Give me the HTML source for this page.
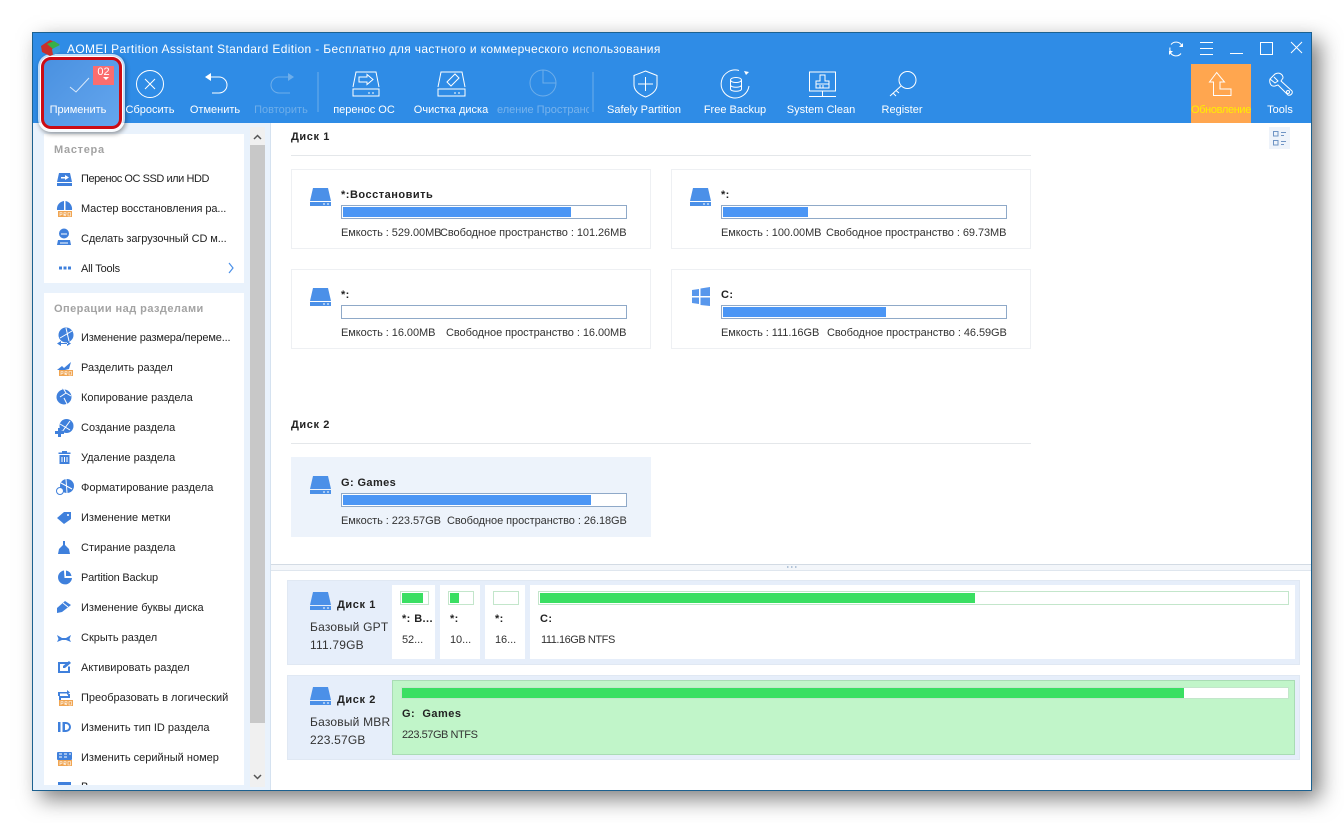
<!DOCTYPE html>
<html><head><meta charset="utf-8"><style>
html,body{margin:0;padding:0;background:#fff;width:1344px;height:823px;overflow:hidden;font-family:"Liberation Sans",Arial,sans-serif;font-size:11px;color:#1a1a1a}
div,span{position:absolute;box-sizing:border-box}
.t{white-space:nowrap;line-height:14px;height:14px;margin-top:1px}
.tb{color:#fff;text-align:center;width:100px;top:102px}
.si{left:81px;color:#222;letter-spacing:0}
.h{font-weight:bold;color:#222;letter-spacing:.4px}
.card{width:360px;height:80px;border:1px solid #eef0f3;background:#fff}
.bar{width:286px;height:14px;border:1px solid #8fa9c8;background:#fff}
.fill{left:1px;top:1px;height:10px;background:#4b96f5}
.cap{left:341px;color:#333;letter-spacing:-.06px}
.ntfs{letter-spacing:-.45px}
.gb{border:1px solid #c3e6cb;background:#fff}
.gf{background:#3adf62}
.cell{background:#fff;top:585px;height:74px}
svg{position:absolute;left:0;top:0}
</style></head><body>
<div style="left:32px;top:32px;width:1280px;height:759px;box-shadow:8px 8px 20px rgba(0,0,0,.5);background:#fff;border:1px solid #1c6190"></div>
<div style="left:33px;top:33px;width:1278px;height:90px;background:#2f8ce6"></div>
<div style="left:33px;top:123px;width:238px;height:667px;background:#e9f2fc"></div>
<div style="left:270px;top:123px;width:1px;height:667px;background:#d5e2f0"></div>
<div style="left:44px;top:134px;width:200px;height:149px;background:#fff"></div>
<div style="left:44px;top:293px;width:200px;height:492px;background:#fff"></div>
<div style="left:250px;top:127px;width:15px;height:660px;background:#f0f0f0"></div>
<div style="left:250px;top:145px;width:15px;height:578px;background:#c8c8c8"></div>
<div style="left:271px;top:564px;width:1040px;height:1px;background:#d3dbe4"></div>
<div style="left:271px;top:565px;width:1040px;height:5px;background:#f3f6fa"></div>
<div style="left:271px;top:570px;width:1040px;height:1px;background:#dfe6ee"></div>

<!-- apply highlight -->
<div style="left:38px;top:54px;width:87px;height:78px;border-radius:13px;background:#fff;opacity:.7;box-shadow:1px 2px 5px rgba(0,0,0,.55)"></div>
<div style="left:41px;top:57px;width:81px;height:72px;border:3px solid #cc0c14;border-radius:10px;background:linear-gradient(135deg,#4a91e0,#64a6ee);box-shadow:0 0 0 1px #fff"></div>
<div style="left:93px;top:66px;width:21px;height:19px;background:#fb6d6f"></div>
<div class="t" style="left:93px;top:64px;width:21px;text-align:center;color:#fff;font-size:11px">02</div>

<!-- title -->
<div class="t" style="left:67px;top:41px;color:#fff;font-size:12px;letter-spacing:.36px">AOMEI Partition Assistant Standard Edition - Бесплатно для частного и коммерческого использования</div>

<!-- toolbar labels -->
<div class="t tb" style="left:28px">Применить</div>
<div class="t tb" style="left:100px">Сбросить</div>
<div class="t tb" style="left:165px">Отменить</div>
<div class="t tb" style="left:231px;color:#6eaeea">Повторить</div>
<div class="t tb" style="left:314px">перенос ОС</div>
<div class="t tb" style="left:401px">Очистка диска</div>
<div class="t tb" style="left:497px;width:92px;overflow:hidden;color:#78b3ec;text-align:left"><span class="t" style="left:0;top:0;margin-top:0">еление Пространс</span></div>
<div class="t tb" style="left:594px">Safely Partition</div>
<div class="t tb" style="left:685px">Free Backup</div>
<div class="t tb" style="left:771px">System Clean</div>
<div class="t tb" style="left:852px">Register</div>
<div style="left:1191px;top:64px;width:60px;height:59px;background:#ffa64f"></div>
<div class="t tb" style="left:1171px;color:#ffee00;letter-spacing:-.35px">Обновление</div>
<div class="t tb" style="left:1230px">Tools</div>

<!-- sidebar text -->
<div class="t h" style="left:54px;top:142px;color:#a3a3a3;letter-spacing:.7px">Мастера</div>
<div class="t si" style="top:171px;letter-spacing:-.45px">Перенос ОС SSD или HDD</div>
<div class="t si" style="top:201px;letter-spacing:-.1px">Мастер восстановления ра...</div>
<div class="t si" style="top:231px;letter-spacing:-.1px">Сделать загрузочный CD м...</div>
<div class="t si" style="top:261px;letter-spacing:-.2px">All Tools</div>
<div class="t h" style="left:54px;top:301px;color:#a3a3a3;letter-spacing:.45px">Операции над разделами</div>
<div class="t si" style="top:330px;letter-spacing:-.15px">Изменение размера/переме...</div>
<div class="t si" style="top:360px">Разделить раздел</div>
<div class="t si" style="top:390px">Копирование раздела</div>
<div class="t si" style="top:420px">Создание раздела</div>
<div class="t si" style="top:450px">Удаление раздела</div>
<div class="t si" style="top:480px">Форматирование раздела</div>
<div class="t si" style="top:510px">Изменение метки</div>
<div class="t si" style="top:540px">Стирание раздела</div>
<div class="t si" style="top:570px;letter-spacing:-.2px">Partition Backup</div>
<div class="t si" style="top:600px">Изменение буквы диска</div>
<div class="t si" style="top:630px">Скрыть раздел</div>
<div class="t si" style="top:660px">Активировать раздел</div>
<div class="t si" style="top:690px">Преобразовать в логический</div>
<div class="t si" style="top:720px">Изменить тип ID раздела</div>
<div class="t si" style="top:750px">Изменить серийный номер</div>
<div style="left:81px;top:780px;width:100px;height:5px;overflow:hidden"><span class="t" style="left:0;top:0;margin-top:0;color:#222">В</span></div>

<!-- top cards -->
<div class="t h" style="left:291px;top:129px;letter-spacing:.6px">Диск 1</div>
<div style="left:291px;top:155px;width:740px;height:1px;background:#e4e7ea"></div>
<div class="t h" style="left:291px;top:417px;letter-spacing:.6px">Диск 2</div>
<div style="left:291px;top:443px;width:740px;height:1px;background:#e4e7ea"></div>

<div class="card" style="left:291px;top:169px"></div>
<div class="card" style="left:671px;top:169px"></div>
<div class="card" style="left:291px;top:269px"></div>
<div class="card" style="left:671px;top:269px"></div>
<div class="card" style="left:291px;top:457px;background:#edf3fb;border-color:#edf3fb"></div>

<div class="t h" style="left:341px;top:187px;letter-spacing:.5px">*:Восстановить</div>
<div class="bar" style="left:341px;top:205px"><div class="fill" style="width:228px"></div></div>
<div class="t cap" style="top:225px">Емкость : 529.00MB</div><div class="t cap" style="left:440px;top:225px">Свободное пространство : 101.26MB</div>

<div class="t h" style="left:721px;top:187px">*:</div>
<div class="bar" style="left:721px;top:205px"><div class="fill" style="width:85px"></div></div>
<div class="t cap" style="left:721px;top:225px">Емкость : 100.00MB</div><div class="t cap" style="left:826px;top:225px">Свободное пространство : 69.73MB</div>

<div class="t h" style="left:341px;top:287px">*:</div>
<div class="bar" style="left:341px;top:305px"></div>
<div class="t cap" style="top:325px">Емкость : 16.00MB</div><div class="t cap" style="left:446px;top:325px">Свободное пространство : 16.00MB</div>

<div class="t h" style="left:721px;top:287px">C:</div>
<div class="bar" style="left:721px;top:305px"><div class="fill" style="width:163px"></div></div>
<div class="t cap" style="left:721px;top:325px">Емкость : 111.16GB</div><div class="t cap" style="left:827px;top:325px">Свободное пространство : 46.59GB</div>

<div class="t h" style="left:341px;top:475px">G: Games</div>
<div class="bar" style="left:341px;top:493px"><div class="fill" style="width:248px"></div></div>
<div class="t cap" style="top:513px">Емкость : 223.57GB</div><div class="t cap" style="left:447px;top:513px">Свободное пространство : 26.18GB</div>

<!-- disk map -->
<div style="left:287px;top:580px;width:1013px;height:85px;background:#e6eefa;border:1px solid #e0e8f3"></div>
<div style="left:287px;top:675px;width:1013px;height:85px;background:#e6eefa;border:1px solid #e0e8f3"></div>
<div class="cell" style="left:392px;width:43px"></div>
<div class="cell" style="left:440px;width:40px"></div>
<div class="cell" style="left:485px;width:40px"></div>
<div class="cell" style="left:530px;width:765px"></div>
<div class="gb" style="left:400px;top:591px;width:29px;height:14px"></div><div class="gf" style="left:402px;top:593px;width:21px;height:10px"></div>
<div class="gb" style="left:448px;top:591px;width:26px;height:14px"></div><div class="gf" style="left:450px;top:593px;width:9px;height:10px"></div>
<div class="gb" style="left:493px;top:591px;width:26px;height:14px"></div>
<div class="gb" style="left:538px;top:591px;width:751px;height:14px"></div><div class="gf" style="left:540px;top:593px;width:435px;height:10px"></div>

<div class="t h" style="left:402px;top:611px">*: B...</div><div class="t cap" style="left:402px;top:632px">52...</div>
<div class="t h" style="left:450px;top:611px">*:</div><div class="t cap" style="left:450px;top:632px">10...</div>
<div class="t h" style="left:495px;top:611px">*:</div><div class="t cap" style="left:495px;top:632px">16...</div>
<div class="t h" style="left:540px;top:611px">C:</div><div class="t cap ntfs" style="left:541px;top:632px">111.16GB NTFS</div>

<div style="left:392px;top:680px;width:903px;height:75px;background:#c1f5c9;border:1px solid #a9dcb4"></div>
<div style="left:401px;top:687px;width:888px;height:12px;background:#fff;border:1px solid #c3e6cb"></div>
<div class="gf" style="left:402px;top:688px;width:782px;height:10px"></div>
<div class="t h" style="left:402px;top:706px;letter-spacing:.5px">G:&nbsp; Games</div>
<div class="t cap ntfs" style="left:402px;top:727px">223.57GB NTFS</div>

<div class="t h" style="left:337px;top:597px;letter-spacing:.6px">Диск 1</div>
<div class="t" style="left:310px;top:619px;font-size:12px;color:#333;letter-spacing:.2px">Базовый GPT</div>
<div class="t" style="left:310px;top:637px;font-size:12px;color:#333;letter-spacing:.2px">111.79GB</div>
<div class="t h" style="left:337px;top:692px;letter-spacing:.6px">Диск 2</div>
<div class="t" style="left:310px;top:714px;font-size:12px;color:#333;letter-spacing:.2px">Базовый MBR</div>
<div class="t" style="left:310px;top:732px;font-size:12px;color:#333;letter-spacing:.2px">223.57GB</div>

<svg width="1344" height="823" viewBox="0 0 1344 823" fill="none">
<defs>
<g id="hdd"><path d="M3 0H18L21 13H0Z" fill="#4b90e8"/><path d="M0 14H21V18H0Z" fill="#4b90e8"/><path d="M13 16h2M17 16h2" stroke="#fff"/></g>
<g id="pro"><rect width="14" height="6" fill="#f0a552"/><path d="M2 5v-3.500h2v2H2M6 5V1.500h2v2H6l2 1.500M10 1.500h2.500V5H10z" stroke="#fff" stroke-width=".6"/></g>
</defs>
<!-- logo -->
<path d="M41 46L50 40 59 44 60 52 50 56 42 52Z" fill="#c9302a"/><path d="M47 44L54 41 60 45 53 49Z" fill="#38b048"/><path d="M52 49L60 45 60 52 53 55Z" fill="#3a9ad8"/>
<!-- splitter dots -->
<path d="M787 567h1.500M791 567h1.500M795 567h1.500" stroke="#9db4cc" stroke-width="1.500"/>
<!-- toolbar icons -->
<g stroke="#fff" stroke-width="1">
<path d="M70 87L76 92 89 78" stroke="#dbeafb"/>
<circle cx="150" cy="84" r="13.500"/><path d="M145 79L155 89M155 79L145 89"/>
<path d="M209 77H219A8 8 0 0 1 219 93H212"/>
<path d="M279 77A8 8 0 0 0 279 93H290M279 77H290" stroke="#6eaeea"/>
<path d="M353 87L356 72H376L379 87M353 89H379V96H353ZM372 93h2M368 93h2"/>
<path d="M359 77H367V74.500L373 79.500 367 84.500V82H359Z"/>
<path d="M438 87L441 72H462L465 87M438 89H465V96H438ZM458 93h2M454 93h2"/>
<path d="M447 82L455 74 459 78 451 86Z"/>
<path d="M593 72V112M318 72V112" stroke="#6eaeea"/>
<circle cx="543" cy="83" r="13" stroke="#6eaeea"/><path d="M543 70V83H556" stroke="#6eaeea"/>
<path d="M645.500 71L657 75.500V85C657 91 651 95 645.500 97 640 95 634 91 634 85V75.500Z"/><path d="M645.500 77V91M638 84H653"/>
<path d="M749 86A14 14 0 1 1 739 70.500"/>
<ellipse cx="736" cy="80" rx="5.500" ry="2.500"/><path d="M730.500 80V89C730.500 92 741.500 92 741.500 89V80M730.500 85C730.500 88 741.500 88 741.500 85"/>
<path d="M809.500 72H835.500V91H809.500ZM822.500 91V96M809 96.500H836"/>
<path d="M820 75H825V81H829V88H816V81H820ZM816 84H829M820 85V88M823 85V88"/>
<circle cx="907.500" cy="80" r="8.500"/><path d="M901 86L890 96M893 93L896 96M896 90.500L899 93"/>
<path d="M1216.700 72.500L1209.500 82H1213.500V95.500H1231V89H1220V82H1224.500Z"/>
<path d="M1270 79L1275 74C1279 72 1283 74 1283 78L1281 81 1292 91C1293 93 1291 96 1288 95L1278 85 1275 86C1271 87 1269 83 1270 79L1275 83 1278 81 1274 77" stroke-linejoin="round"/><circle cx="1288" cy="92" r="1.500"/>
<path d="M1171 44.500A6.500 6.500 0 0 1 1182 46M1181 53.500A6.500 6.500 0 0 1 1170 52M1170 47.500A6.500 6.500 0 0 0 1170.500 52"/>
<path d="M1200 42.500H1213M1200 48.500H1213M1200 54.500H1213M1230 53.500H1243"/>
<rect x="1260.500" y="42.500" width="12" height="12"/><path d="M1291 42L1302 53M1302 42L1291 53"/>
</g>
<path d="M205 77L211 73V81Z" fill="#fff"/><path d="M294 77L288 73V81Z" fill="#6eaeea"/><path d="M744 71L749 72 746 75Z" fill="#fff"/>
<path d="M1183 43V47H1179ZM1169 55V51H1173Z" fill="#fff"/>
<path d="M103 77H109L106 80Z" fill="#fff"/>
<!-- view toggle -->
<rect x="1269" y="127" width="21" height="22" fill="#eef3fa"/>
<g stroke="#6f94c4"><rect x="1273.500" y="131.500" width="4.500" height="4.500"/><rect x="1273.500" y="140.500" width="4.500" height="4.500"/><path d="M1281 132.500h5M1281 135.500h3M1281 141.500h5M1281 144.500h3"/></g>
<!-- scroll arrows -->
<path d="M254 139L257.500 135.500 261 139" stroke="#555" stroke-width="1.500"/>
<path d="M254 775L257.500 778.500 261 775" stroke="#555" stroke-width="1.500"/>
<path d="M229 263L233 268 229 273" stroke="#4b90e8" stroke-width="1.200"/>
<!-- hdd icons -->
<use href="#hdd" x="310" y="188"/><use href="#hdd" x="690" y="188"/><use href="#hdd" x="310" y="288"/><use href="#hdd" x="310" y="476"/>
<use href="#hdd" x="310" y="592"/><use href="#hdd" x="310" y="687"/>
<path d="M692 290L699 289V296H692ZM700.500 288.500L710 287V296H700.500ZM692 297.500H699V304L692 303ZM700.500 297.500H710V306L700.500 305Z" fill="#5897ec"/>
<!-- sidebar icons -->
<g fill="#3f80dc">
<path d="M59 173H70L72 182H57ZM57 183H72V186H57Z"/><path d="M61 177H65V175L69 177.500 65 180V178.500H61Z" fill="#fff"/>
<path d="M65.500 201A8 8 0 0 1 72 210H65.500ZM64 201V210H57A8 8 0 0 1 64 201Z"/>
<circle cx="64" cy="233.500" r="5"/><path d="M58 240H70L71 245H57Z"/><path d="M61 234h6" stroke="#fff"/><path d="M60 243h8" stroke="#fff"/>
<rect x="59" y="266.500" width="3" height="3"/><rect x="63.500" y="266.500" width="3" height="3"/><rect x="68" y="266.500" width="3" height="3"/>
<circle cx="66" cy="335" r="7.500"/><path d="M60 338L72 331M66 328L69 341" stroke="#fff"/><path d="M57 343.500L61 341V346ZM71 343.500L67 341V346ZM60 343h8v1h-8Z"/>
<path d="M57 370L62 366 64 368 71 362 69 369 65 370Z"/>
<circle cx="64" cy="397" r="7.500"/><path d="M63 388L66 393 60 397M66 393L71 396M64 398L67 404" stroke="#fff"/>
<circle cx="66.500" cy="426" r="7"/><path d="M62 432L70 421M60 424L70 430" stroke="#fff"/><path d="M58 428H61V431H64V434H61V437H58V434H55V431H58Z"/>
<path d="M62 451H67V452.500H70.500V454H58.500V452.500H62ZM59.500 455H69.500V464H59.500Z"/><path d="M62 457V462M64.500 457V462M67 457V462" stroke="#fff"/>
<circle cx="67" cy="486" r="7"/><path d="M61 483L72 489M66 479L67 493" stroke="#fff"/><circle cx="60" cy="491" r="3.500" stroke="#3f80dc" fill="#fff"/>
<path d="M57 518L64 512H71V519L64 524Z"/><circle cx="68" cy="515" r="1" fill="#fff"/>
<path d="M63 541H65V545L69 549 70 554H58L59 549 63 545Z"/>
<path d="M64 570.500A7 7 0 1 0 72 578L64.500 578Z"/><path d="M66 570.500A7 7 0 0 1 71.500 576H66Z"/>
<path d="M57 608L65 601 71 605 62 612 57 613Z"/><path d="M63 603L68 607" stroke="#fff"/>
<path d="M57 635L62 638H66L71 635 69.500 639 71 642 66 640H62L57 642 58.500 639Z"/>
<path d="M58 662H68V664H60V671H68V666.500H70V673H58Z"/><path d="M63 666L69 661 71 663 65 668 63 668Z"/>
<path d="M58 696V692H67V690L70 692.500 67 695V693.500H60V696ZM70 694V698H61V700H59V696H68V694Z"/>
<path d="M58 722H60.500V732H58ZM62.500 722H66A5 5 0 0 1 66 732H62.500ZM65 724V730H66A3 3 0 0 0 66 724Z"/>
<rect x="57" y="752" width="15" height="8" rx="1"/>
<rect x="58" y="782" width="13" height="3"/>
</g>
<use href="#pro" x="58" y="211"/><use href="#pro" x="59" y="370"/><use href="#pro" x="59" y="700"/><use href="#pro" x="58" y="760"/>
<path d="M59 754h3M64 754h3M69 754h2M59 757h3M64 757h3" stroke="#fff"/>
</svg>
</body></html>
